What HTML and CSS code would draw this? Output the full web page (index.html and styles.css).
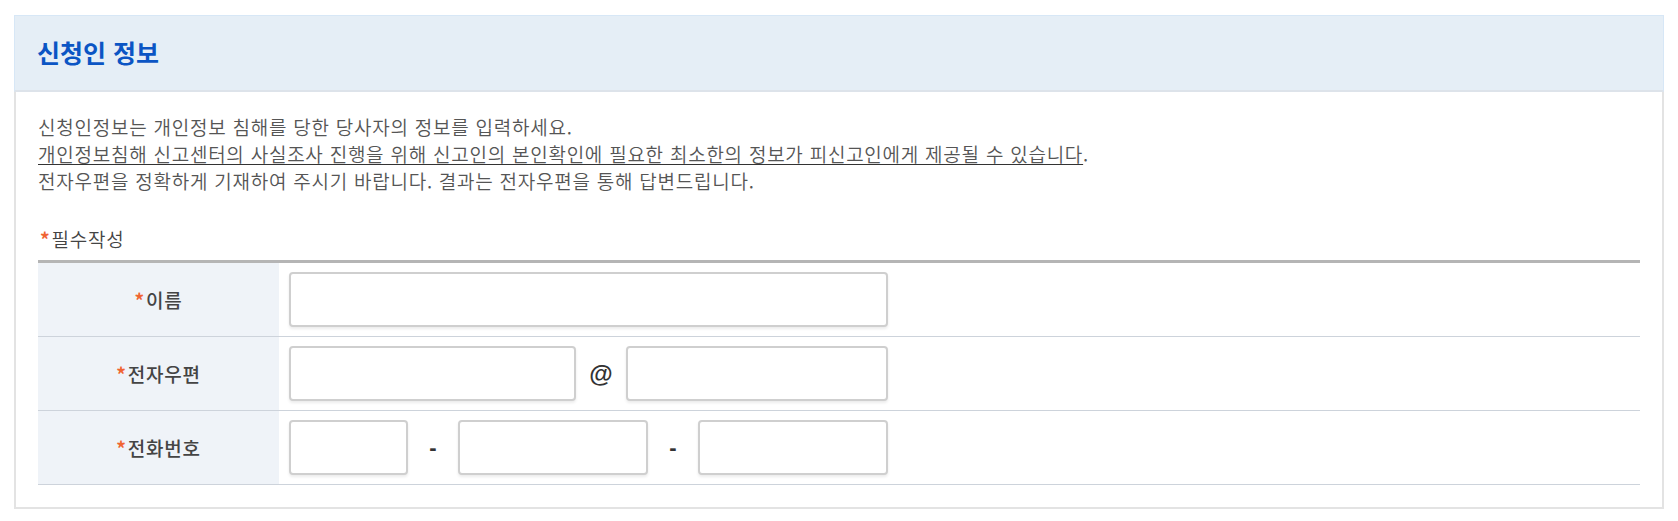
FILE: index.html
```html
<!DOCTYPE html>
<html lang="ko">
<head>
<meta charset="utf-8">
<title>신청인 정보</title>
<link rel="stylesheet" href="styles.css">
</head>
<body>
<div class="page">
  <section class="panel">
    <header class="panel-head">
      <h2 class="panel-title">신청인 정보</h2>
    </header>
    <div class="panel-body">
      <div class="notice">
        <p>신청인정보는 개인정보 침해를 당한 당사자의 정보를 입력하세요.</p>
        <p><span class="ul">개인정보침해 신고센터의 사실조사 진행을 위해 신고인의 본인확인에 필요한 최소한의 정보가 피신고인에게 제공될 수 있습니다</span>.</p>
        <p>전자우편을 정확하게 기재하여 주시기 바랍니다. 결과는 전자우편을 통해 답변드립니다.</p>
      </div>
      <p class="required"><span class="star">*</span>필수작성</p>
      <div class="form">
        <div class="row">
          <div class="label"><span class="star">*</span>이름</div>
          <div class="field">
            <input class="inp w-name" type="text">
          </div>
        </div>
        <div class="row">
          <div class="label"><span class="star">*</span>전자우편</div>
          <div class="field">
            <input class="inp w-mail1" type="text">
            <span class="sep at">@</span>
            <input class="inp w-mail2" type="text">
          </div>
        </div>
        <div class="row">
          <div class="label"><span class="star">*</span>전화번호</div>
          <div class="field">
            <input class="inp w-tel1" type="text">
            <span class="sep dash">-</span>
            <input class="inp w-tel2" type="text">
            <span class="sep dash">-</span>
            <input class="inp w-tel3" type="text">
          </div>
        </div>
      </div>
    </div>
  </section>
</div>
</body>
</html>
```

FILE: styles.css
```css
* { box-sizing: border-box; }
html, body { margin: 0; padding: 0; background: #fff; }
body {
  font-family: "Noto Sans CJK KR", "Noto Sans", sans-serif;
  color: #555;
}
.page { padding: 15px 14px 10px 14px; }
.panel {
  border: 2px solid #e3e3e3;
  border-top: 0;
  background: #fff;
}
.panel-head {
  background: #e5eef6;
  border: 1px solid #d7e7f6;
  border-bottom: 2px solid #dde3ea;
  height: 77px;
  display: flex;
  align-items: center;
  padding-left: 22px;
  margin: 0 -2px;
}
.panel-title {
  margin: 0 0 2px 0;
  font-size: 25px;
  font-weight: 700;
  color: #0b55c4;
  letter-spacing: 0;
}
.panel-body { padding: 21px 22px 22px 22px; }
.notice p {
  margin: 0;
  font-size: 19px;
  line-height: 27px;
  letter-spacing: 0.75px;
  color: #555;
  font-weight: 350;
}
.ul { text-decoration: underline; text-underline-offset: 2px; text-decoration-color: #333; }
.required {
  margin: 31px 0 8px 2px;
  font-size: 19px;
  line-height: 27px;
  letter-spacing: 0.8px;
  color: #444;
  font-weight: 350;
}
.star { color: #f06432; font-weight: 700; margin-right: 1px; }
.form { border-top: 3px solid #b5b5b5; }
.row {
  display: grid;
  grid-template-columns: 241px 1fr;
  border-bottom: 1px solid #cdd3db;
}
.label {
  background: #eff3f8;
  display: flex;
  align-items: center;
  justify-content: center;
  font-size: 19px;
  font-weight: 500;
  letter-spacing: 0.8px;
  color: #444;
}
.field {
  display: flex;
  align-items: center;
  padding: 9px 10px;
}
.inp {
  height: 55px;
  border: 2px solid #cfcfcf;
  border-radius: 4px;
  background: #fff;
  box-shadow: 0 2px 3px rgba(0,0,0,0.08);
  outline: none;
  padding: 0 10px;
  font-size: 16px;
}
.w-name { width: 599px; }
.w-mail1 { width: 287px; }
.w-mail2 { width: 262px; }
.w-tel1 { width: 119px; }
.w-tel2 { width: 190px; }
.w-tel3 { width: 190px; }
.sep {
  font-family: "Liberation Sans", Arial, sans-serif;
  font-weight: 700;
  color: #333;
  text-align: center;
}
.at { width: 50px; font-size: 24px; }
.dash { width: 50px; font-size: 22px; }
```
